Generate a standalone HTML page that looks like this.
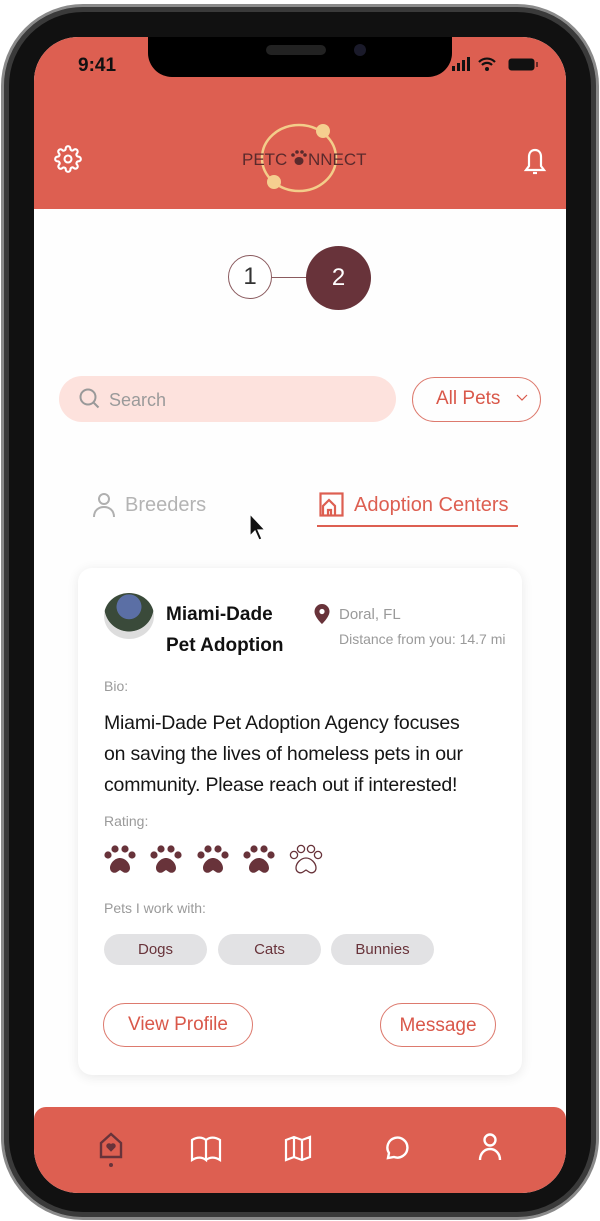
<!DOCTYPE html>
<html><head><meta charset="utf-8"><style>
*{margin:0;padding:0;box-sizing:border-box}
body{width:600px;height:1221px;background:#fff;position:relative;overflow:hidden;font-family:"Liberation Sans",sans-serif}
.a{position:absolute}
.frame{left:1px;top:4px;width:598px;height:1216px;border-radius:82px;background:#111;border:3px solid #8a8a8a;box-shadow:inset 0 0 0 5px #3a3a3a}
.screen{left:34px;top:37px;width:532px;height:1156px;border-radius:44px;background:#fefefe;overflow:hidden}
.hdr{left:0;top:0;width:532px;height:172px;background:#dd5f51}
.notch{left:114px;top:-2px;width:304px;height:42px;background:#000;border-radius:0 0 24px 24px}
.g{color:#9a9a9a}
.chip{top:897px;height:31px;border-radius:16px;background:#e2e2e4;color:#68333a;font-size:15px;text-align:center;line-height:31px}
.btn{border:1.5px solid #dd7a6e;border-radius:23px;color:#d9584a;font-size:19px;text-align:center}
</style></head><body>
<div class="a frame"></div>
<div class="a screen">
 <div class="a hdr"></div>
 <div class="a notch"></div>
 <div class="a" style="width:60px;height:10px;border-radius:5px;background:#222;left:232px;top:8px"></div>
 <div class="a" style="left:320px;top:7px;width:12px;height:12px;border-radius:6px;background:#1a1a2a"></div>
 <div class="a" style="left:44px;top:18px;font-size:19px;font-weight:bold;color:#111">9:41</div>
 <svg class="a" style="left:416px;top:20px" width="90" height="16"><rect x="2" y="9" width="3" height="5" fill="#111"/><rect x="7" y="6" width="3" height="8" fill="#111"/><rect x="12" y="3" width="3" height="11" fill="#111"/><rect x="17" y="0" width="3" height="14" fill="#111"/><path d="M29 5a11 11 0 0 1 16 0M32 8a7 7 0 0 1 10 0" stroke="#111" stroke-width="2.2" fill="none"/><circle cx="37" cy="12" r="2" fill="#111"/><rect x="59" y="2" width="25" height="11" rx="2.5" fill="#111" stroke="#111"/><rect x="86" y="5" width="2" height="5" fill="#6a2a28"/></svg>
 <svg class="a" style="left:20px;top:108px" width="28" height="28" viewBox="0 0 24 24" fill="none" stroke="#fff" stroke-width="1.8"><circle cx="12" cy="12" r="3"/><path d="M19.4 15a1.65 1.65 0 0 0 .33 1.82l.06.06a2 2 0 1 1-2.830 2.83l-.06-.06a1.65 1.65 0 0 0-1.82-.33 1.65 1.65 0 0 0-1 1.51V21a2 2 0 1 1-4 0v-.09A1.65 1.65 0 0 0 9 19.4a1.65 1.65 0 0 0-1.82.33l-.06.06a2 2 0 1 1-2.83-2.83l.06-.06A1.65 1.65 0 0 0 4.68 15a1.65 1.65 0 0 0-1.51-1H3a2 2 0 1 1 0-4h.09A1.65 1.65 0 0 0 4.6 9a1.65 1.65 0 0 0-.33-1.82l-.06-.06a2 2 0 1 1 2.83-2.83l.06.06A1.65 1.65 0 0 0 9 4.68a1.650 1.650 0 0 0 1-1.51V3a2 2 0 1 1 4 0v.09a1.65 1.65 0 0 0 1 1.51 1.65 1.65 0 0 0 1.82-.33l.06-.06a2 2 0 1 1 2.83 2.83l-.06.06A1.65 1.65 0 0 0 19.4 9a1.65 1.65 0 0 0 1.51 1H21a2 2 0 1 1 0 4h-.09a1.65 1.65 0 0 0-1.51 1z"/></svg>
 <svg class="a" style="left:488px;top:110px" width="26" height="30" viewBox="0 0 26 30" fill="none" stroke="#fff" stroke-width="2.2"><path d="M13 3c-4 0-6 3-6 7v9l-3 4h18l-3-4v-9c0-4-2-7-6-7z"/><path d="M11 26h4"/></svg>
 <svg class="a" style="left:0;top:0" width="532" height="172">
  <ellipse cx="265" cy="121" rx="37" ry="33" fill="none" stroke="#f3cd8a" stroke-width="2.5"/>
  <circle cx="289" cy="94" r="7" fill="#f5cf8f"/><circle cx="240" cy="145" r="7" fill="#f5cf8f"/>
  <text x="208" y="128" font-family="Liberation Sans" font-size="17" fill="#5a2a2c">PETC</text>
  <g fill="#5a2a2c"><ellipse cx="265" cy="124" rx="4.5" ry="4"/><circle cx="259" cy="118" r="1.8"/><circle cx="263" cy="115" r="1.8"/><circle cx="268" cy="115" r="1.8"/><circle cx="271" cy="118" r="1.8"/></g>
  <text x="274" y="128" font-family="Liberation Sans" font-size="17" fill="#5a2a2c">NNECT</text>
 </svg>

 <div class="a" style="left:236px;top:240px;width:40px;height:0;border-top:1px solid #8a5a5e"></div>
 <div class="a" style="left:194px;top:218px;width:44px;height:44px;border:1px solid #8a5a5e;border-radius:50%;background:#fff;text-align:center;line-height:42px;font-size:24px;color:#333">1</div>
 <div class="a" style="left:272px;top:209px;width:65px;height:64px;border-radius:50%;background:#68333a;text-align:center;line-height:64px;font-size:24px;color:#fff">2</div>

 <div class="a" style="left:25px;top:339px;width:337px;height:46px;border-radius:23px;background:#fde2dd"></div>
 <svg class="a" style="left:44px;top:350px" width="24" height="24" fill="none" stroke="#999" stroke-width="2"><circle cx="10" cy="10" r="7.5"/><path d="M15.5 15.5l5 5"/></svg>
 <div class="a g" style="left:75px;top:353px;font-size:18px">Search</div>
 <div class="a btn" style="left:378px;top:340px;width:129px;height:45px;line-height:42px;text-align:left;padding-left:23px;font-size:19px">All Pets</div>
 <svg class="a" style="left:482px;top:357px" width="12" height="8" fill="none" stroke="#d9584a" stroke-width="1.2"><path d="M1 1l5 5 5-5"/></svg>

 <svg class="a" style="left:58px;top:455px" width="24" height="26" fill="none" stroke="#b0b0b0" stroke-width="2"><circle cx="12" cy="7" r="5"/><path d="M2 25c0-7 5-10 10-10s10 3 10 10"/></svg>
 <div class="a" style="left:91px;top:457px;font-size:20px;color:#b4b4b4">Breeders</div>
 <svg class="a" style="left:285px;top:455px" width="26" height="26" fill="none" stroke="#dd5f51" stroke-width="2.2"><rect x="1.5" y="1.5" width="22" height="22"/><path d="M4 23v-9l6-6 6 6v9M9 23v-5h3v5"/></svg>
 <div class="a" style="left:320px;top:457px;font-size:20px;color:#dd5f51">Adoption Centers</div>
 <div class="a" style="left:283px;top:488px;width:201px;height:2px;background:#dd5f51"></div>
 <svg class="a" style="left:214px;top:475px" width="20" height="32"><path d="M2 2v22l5-5 4 9 3-1-4-9h7z" fill="#111" stroke="#fff" stroke-width="1.2"/></svg>

 <div class="a" style="left:44px;top:531px;width:444px;height:507px;border-radius:14px;background:#fff;box-shadow:0 2px 12px rgba(0,0,0,.09)"></div>
 <div class="a" style="left:70px;top:556px;width:50px;height:46px;border-radius:50%;background:radial-gradient(circle at 50% 30%,#5b6fa5 0 30%,#3a4a3a 31% 60%,#ddd 61%)"></div>
 <div class="a" style="left:132px;top:562px;font-size:19px;font-weight:bold;line-height:31px;color:#111">Miami-Dade<br>Pet Adoption</div>
 <svg class="a" style="left:279px;top:566px" width="18" height="22"><path d="M9 1a7.5 7.5 0 0 0-7.5 7.5C1.5 14 9 21 9 21s7.5-7 7.5-12.5A7.5 7.5 0 0 0 9 1z" fill="#68333a"/><circle cx="9" cy="8.5" r="2.6" fill="#fff"/></svg>
 <div class="a g" style="left:305px;top:569px;font-size:15px">Doral, FL</div>
 <div class="a g" style="left:305px;top:594px;font-size:14px">Distance from you: 14.7 mi</div>
 <div class="a g" style="left:70px;top:641px;font-size:14px">Bio:</div>
 <div class="a" style="left:70px;top:671px;font-size:19.5px;line-height:31px;color:#151515;white-space:nowrap;letter-spacing:-0.2px">Miami-Dade Pet Adoption Agency focuses<br>on saving the lives of homeless pets in our<br>community. Please reach out if interested!</div>
 <div class="a g" style="left:70px;top:776px;font-size:14px">Rating:</div>
 <svg class="a" style="left:68px;top:804px" width="230" height="40">
  <defs><g id="p"><circle cx="6" cy="11" r="3.6"/><circle cx="13" cy="5" r="3.6"/><circle cx="23" cy="5" r="3.6"/><circle cx="30" cy="11" r="3.6"/><path d="M18 14c-5 0-10 5-10 10 0 4 4 6 7 4l3-2 3 2c3 2 7 0 7-4 0-5-5-10-10-10z"/></g></defs>
  <use href="#p" x="0" y="3" fill="#68333a"/><use href="#p" x="46" y="3" fill="#68333a"/><use href="#p" x="93" y="3" fill="#68333a"/><use href="#p" x="139" y="3" fill="#68333a"/><use href="#p" x="186" y="3" fill="#fff" stroke="#68333a" stroke-width="1.3"/>
 </svg>
 <div class="a g" style="left:70px;top:863px;font-size:14px">Pets I work with:</div>
 <div class="a chip" style="left:70px;width:103px">Dogs</div>
 <div class="a chip" style="left:184px;width:103px">Cats</div>
 <div class="a chip" style="left:297px;width:103px">Bunnies</div>
 <div class="a btn" style="left:69px;top:966px;width:150px;height:44px;line-height:41px">View Profile</div>
 <div class="a btn" style="left:346px;top:966px;width:116px;height:44px;line-height:43px">Message</div>

 <div class="a" style="left:0;top:1070px;width:532px;height:90px;background:#dd5f51;border-radius:12px 12px 0 0"></div>
 <svg class="a" style="left:64px;top:1095px" width="30" height="40" fill="none" stroke="#68333a" stroke-width="2.4"><path d="M3 11l10-9 10 9v14H3z"/><path d="M13 19l-4-4a2 2 0 0 1 4-2 2 2 0 0 1 4 2z" fill="#68333a" stroke-width="1"/><circle cx="13" cy="33" r="2" fill="#68333a" stroke="none"/></svg>
 <svg class="a" style="left:156px;top:1098px" width="32" height="28" fill="none" stroke="#fff" stroke-width="2.2"><path d="M2 5c5-3 10-3 14 0v20c-4-3-9-3-14 0zM16 5c4-3 9-3 14 0v20c-5-3-10-3-14 0"/></svg>
 <svg class="a" style="left:250px;top:1097px" width="28" height="28" fill="none" stroke="#fff" stroke-width="2.2"><path d="M2 6l8-3 8 3 8-3v20l-8 3-8-3-8 3zM10 3v20M18 6v20"/></svg>
 <svg class="a" style="left:348px;top:1098px" width="28" height="28" fill="none" stroke="#fff" stroke-width="2.4"><path d="M6 23l1-5A10 10 0 1 1 12 22z"/></svg>
 <svg class="a" style="left:444px;top:1095px" width="24" height="30" fill="none" stroke="#fff" stroke-width="2.4"><circle cx="12" cy="8" r="5.5"/><path d="M2 28c0-7 5-11 10-11s10 4 10 11"/></svg>
</div>
</body></html>
